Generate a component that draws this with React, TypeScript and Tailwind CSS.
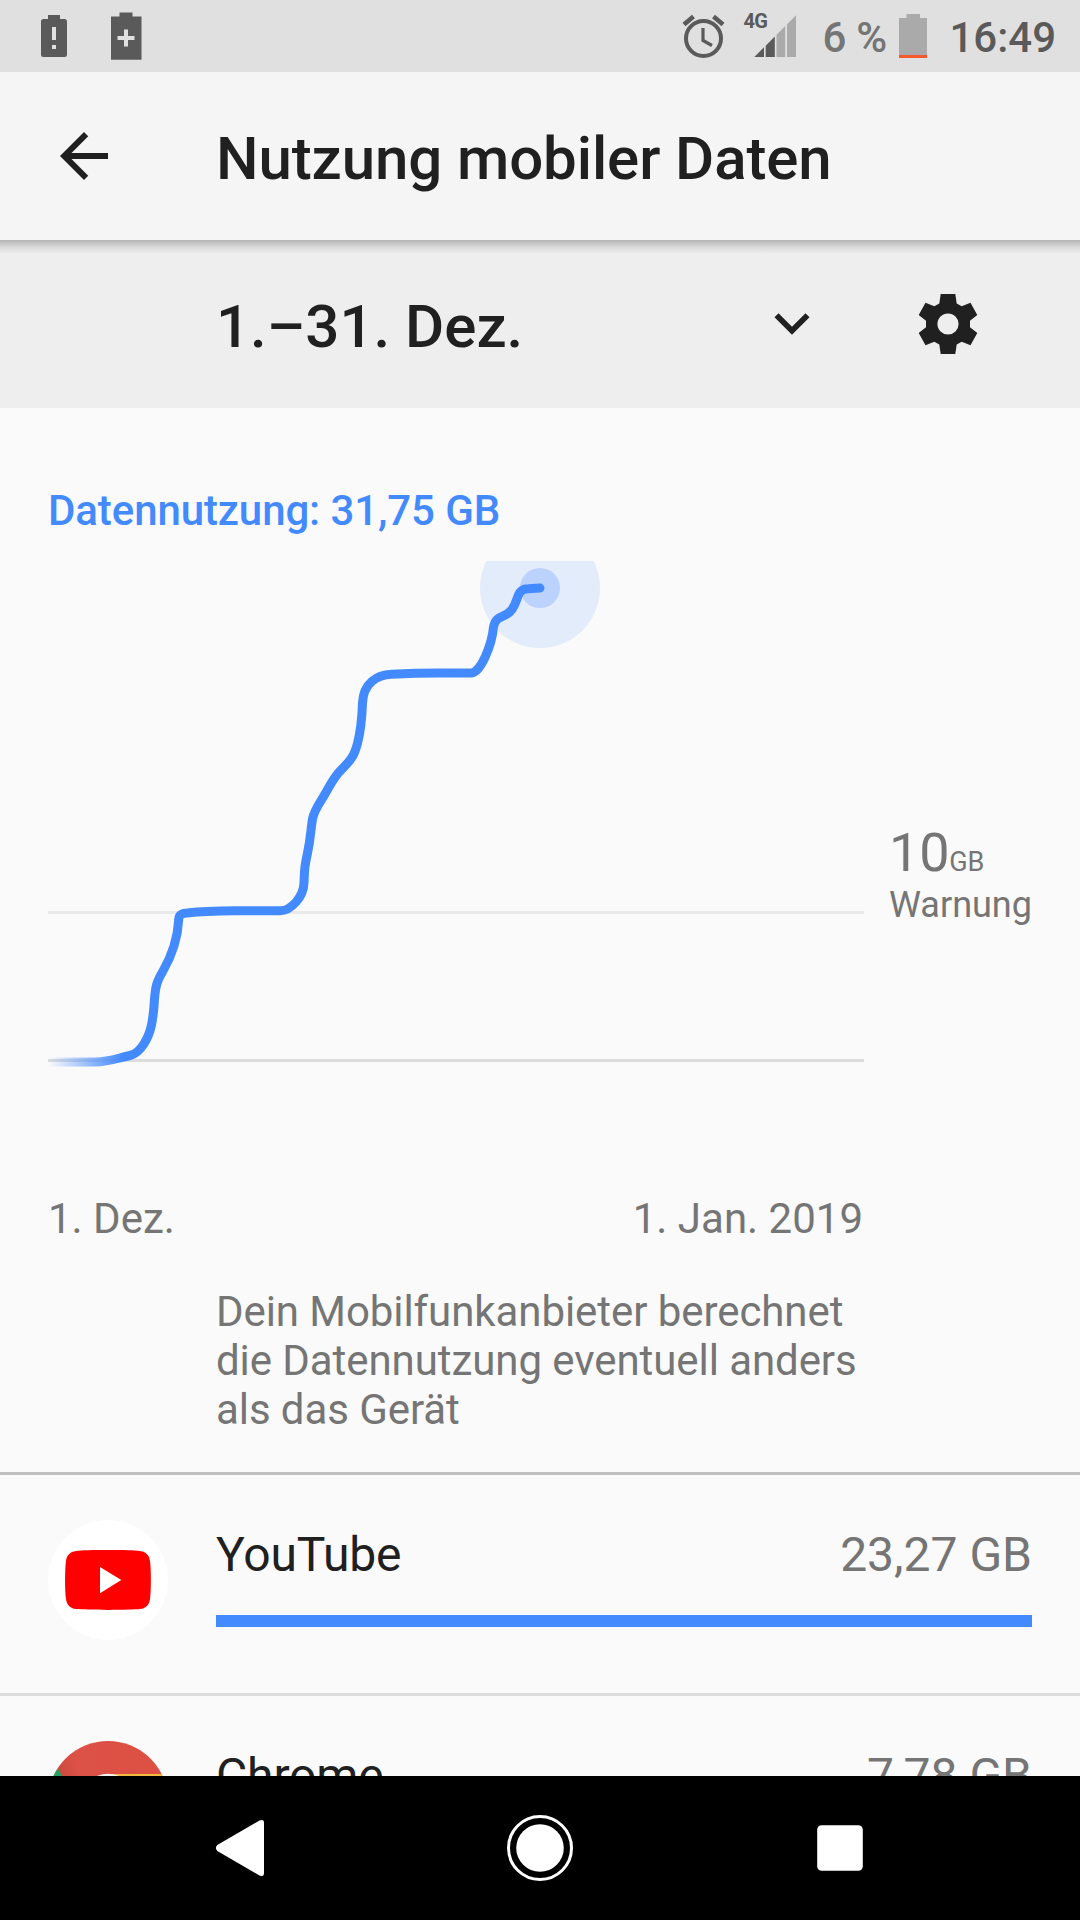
import { ReactNode } from "react";

function StatusBar() {
  return (
    <div className="flex h-[72px] shrink-0 items-start justify-between bg-[#e0e0e0] text-[#5a5a5a]">
      <svg className="h-[72px] w-[160px]" viewBox="0 0 160 72" fill="currentColor">
        <path
          fillRule="evenodd"
          d="M48 15h12v4h4.500a2.500 2.500 0 0 1 2.500 2.500v33a2.500 2.500 0 0 1-2.500 2.500h-21a2.500 2.500 0 0 1-2.500-2.500v-33a2.500 2.500 0 0 1 2.500-2.500h4.500zM52 27v13h4V27zM52 45v4h4v-4z"
        />
        <path
          fillRule="evenodd"
          d="M119.500 12.500h13V16.500H141.500V59.700H111V16.500h8.500zM124 29.500v6.500h-6.500v4h6.500v6.500h4V40h6.500v-4H128v-6.500z"
        />
      </svg>
      <div className="flex h-[72px] items-center pr-6">
        <svg className="h-[72px] w-[60px]" viewBox="678 0 60 72" fill="none" stroke="currentColor">
          <circle cx="703.500" cy="38.500" r="17.500" strokeWidth="4" />
          <path d="M703 28v12.500l9 5" strokeWidth="3.200" />
          <path d="M684 24.500l9.500-8M723 24.500l-9.500-8" strokeWidth="4.600" />
        </svg>
        <svg className="h-[72px] w-[84px]" viewBox="738 0 84 72" fill="currentColor">
          <text x="743.500" y="27.500" fontSize="20" fontWeight="700" textLength="24.500">
            4G
          </text>
          <path d="M754.300 57l9.700-9.700V57zM765.700 45.700l9.100-9.100V57h-9.100z" />
          <path fill="#aaaaaa" d="M776.500 34.800l8.700-8.700V57h-8.700zM787 24.300l9-9V57h-9z" />
        </svg>
        <span className="w-[77px] pt-[3px] text-[42px] leading-none font-medium tracking-[-0.3px] whitespace-nowrap text-[#757575]">
          6 %
        </span>
        <svg className="h-[72px] w-[50px]" viewBox="899 0 50 72">
          <path fill="#aaaaaa" d="M906.500 14H920v4h7v37h-28V18h7.500z" />
          <path fill="#f4592b" d="M899 55h28v3h-28z" />
        </svg>
        <span className="pt-[3px] text-[42px] leading-none font-medium">16:49</span>
      </div>
    </div>
  );
}

function AppBar() {
  return (
    <header className="relative z-10 flex h-[168px] shrink-0 items-center bg-[#f5f5f5] pl-12">
      <svg className="size-[72px]" viewBox="0 0 24 24" fill="#202020">
        <path d="M20 11H7.830l5.590-5.590L12 4l-8 8 8 8 1.410-1.410L7.830 13H20v-2z" />
      </svg>
      <h1 className="pt-[5px] pl-24 text-[60px] leading-[70px] font-medium tracking-[-0.1px]">
        Nutzung mobiler Daten
      </h1>
      <div className="absolute inset-x-0 top-full h-[14px] bg-linear-to-b from-black/25 via-black/9 to-transparent" />
    </header>
  );
}

function CycleBar() {
  return (
    <div className="flex h-[168px] shrink-0 items-center bg-[#eeeeee] pr-24 pl-[216px]">
      <div className="flex-1 pt-[5px] text-[60px] leading-[70px] font-medium">1.–31. Dez.</div>
      <svg className="mr-[84px] size-[72px]" viewBox="0 0 72 72" fill="none">
        <path d="M20.500 27.300L36 42.700l15.500-15.400" stroke="#202020" strokeWidth="5.700" />
      </svg>
      <svg className="size-[72px]" viewBox="-36 -36 72 72" fill="#202020">
        <path
          fillRule="evenodd"
          d="M-7.300-30H7.300L8.700-20.500 13.700-17.800 22.500-21.200 29.300-9 22-3.300V3.300L29.300 9 22.500 21.200 13.700 17.800 8.700 20.500 7.300 30H-7.300L-8.700 20.500-13.700 17.800-22.500 21.200-29.300 9-22 3.300V-3.300L-29.300-9-22.500-21.200-13.700-17.800-8.700-20.500zM0-10.600a10.600 10.600 0 1 0 0 21.200a10.600 10.600 0 1 0 0-21.200z"
        />
      </svg>
    </div>
  );
}

function UsageChart() {
  return (
    <svg className="h-[540px] w-[816px] shrink-0" viewBox="48 561 816 540" fill="none">
      <defs>
        <linearGradient id="fade" gradientUnits="userSpaceOnUse" x1="48" y1="0" x2="122" y2="0">
          <stop offset="0" stopColor="#448aff" stopOpacity="0" />
          <stop offset="1" stopColor="#448aff" />
        </linearGradient>
      </defs>
      <path d="M48 911h816v3H48z" fill="#e9e9e9" />
      <path d="M48 1059h816v3H48z" fill="#dcdcdc" />
      <circle cx="540" cy="588" r="60" fill="#e2ecfb" />
      <circle cx="540" cy="588" r="20" fill="#bbd2fd" />
      <path
        d="M48 1062H95C109 1062 118 1058 130 1055.500C141 1053 149 1037 151.500 1025C154 1012 154 1006 154.500 999C155.500 986 157 981 163 971C171 957 177.500 941 178.700 920C178.700 915 182 913.300 187 913Q205 911 235 910.800H280C291 910.800 303.500 897 304 883C304.500 868 304.800 866 307.500 853C310.800 838 310.500 831 312.500 819C314.500 809 320 803 325 794C332 782 333.500 777.500 341.500 769.500C350 761 354 757 357.500 743.300C361.500 728 362 717 362.500 703C363.300 683 377 674.800 391.500 674.300Q415 673 440 673H471C481 673 492 644 493.500 627C496 614 505 619 512 609.500C519 600 516 589 528 588.700L540 588"
        stroke="url(#fade)"
        strokeWidth="9"
        strokeLinecap="round"
        strokeLinejoin="round"
      />
    </svg>
  );
}

function YouTubeIcon() {
  return (
    <svg className="size-[120px]" viewBox="0 0 120 120">
      <circle cx="60" cy="60" r="60" fill="#fff" />
      <path
        fill="#f00"
        d="M60 30C75 30 87 30.200 92 30.900C98 31.800 101.300 35 102 41C103.200 49 103.200 71 102 79C101.300 85 98 88.200 92 89.100C84 90.200 36 90.200 28 89.100C22 88.200 18.700 85 18 79C16.800 71 16.800 49 18 41C18.700 35 22 31.800 28 30.900C33 30.200 45 30 60 30z"
      />
      <path fill="#fff" d="M52 47l21.300 13L52 73.300z" />
    </svg>
  );
}

function ChromeIcon() {
  return (
    <svg className="size-[120px]" viewBox="0 0 120 120">
      <defs>
        <linearGradient id="red" x1="0" y1="0.300" x2="1" y2="0">
          <stop offset="0" stopColor="#c3453a" />
          <stop offset="0.250" stopColor="#dc5246" />
          <stop offset="1" stopColor="#dd4f42" />
        </linearGradient>
      </defs>
      <circle cx="60" cy="60" r="60" fill="url(#red)" />
      <path fill="#20a464" d="M9.700 27.500L36.500 73.500L60 120A60 60 0 0 1 9.700 27.500z" />
      <path fill="#f4b93f" d="M60 33h53.500A60 60 0 0 1 60 120L83.500 73.500z" />
      <circle cx="60" cy="60" r="27.300" fill="#f1f1f1" />
      <circle cx="60" cy="60" r="22" fill="#4a8af4" />
    </svg>
  );
}

interface AppRowProps {
  icon: ReactNode;
  name: string;
  usage: string;
  percent: number;
}

function AppRow({ icon, name, usage, percent }: AppRowProps) {
  return (
    <li className="flex h-[221px] shrink-0 gap-12 border-b-3 border-[#dcdcdc] px-12 pt-[45px]">
      {icon}
      <div className="flex-1 pt-[7px]">
        <div className="flex justify-between text-[48px] leading-[56px]">
          <span className="tracking-[-0.15px]">{name}</span>
          <span className="text-[#757575]">{usage}</span>
        </div>
        <div className="mt-8 h-3">
          <div className="h-full bg-[#448aff]" style={{ width: `${percent}%` }} />
        </div>
      </div>
    </li>
  );
}

function NavBar() {
  return (
    <nav className="flex h-36 shrink-0 items-center justify-center gap-[228px] bg-black">
      <svg className="size-[72px]" viewBox="0 0 72 72" fill="#fff">
        <path d="M13.300 33L55.500 8.600Q60 6.500 60 11V61Q60 65.500 55.500 63.400L13.300 39Q10.500 36 13.300 33z" />
      </svg>
      <svg className="size-[72px]" viewBox="0 0 72 72">
        <circle cx="36" cy="36" r="31.500" fill="none" stroke="#fff" strokeWidth="3" />
        <circle cx="36" cy="36" r="23.800" fill="#fff" />
      </svg>
      <svg className="size-[72px]" viewBox="0 0 72 72" fill="#fff">
        <rect x="13.200" y="13.200" width="45.600" height="45.600" rx="4.500" />
      </svg>
    </nav>
  );
}

function App() {
  return (
    <div className="flex h-[1920px] w-[1080px] flex-col overflow-hidden bg-[#fafafa] font-[Roboto,sans-serif] text-[#202020]">
      <StatusBar />
      <AppBar />
      <CycleBar />
      <main className="flex flex-1 flex-col overflow-hidden">
        <section className="flex h-[1067px] shrink-0 flex-col border-b-3 border-[#c0c0c0] px-12 pt-[78px] text-[42px] leading-[49px] text-[#757575]">
          <h2 className="font-medium tracking-[-0.1px] text-[#448aff]">Datennutzung: 31,75 GB</h2>
          <div className="mt-[26px] flex gap-[25px]">
            <UsageChart />
            <div className="pt-[260px]">
              <div className="h-[63px] text-[54px] leading-[64px] tracking-[-0.2px] whitespace-nowrap">
                10<span className="text-[27px]">GB</span>
              </div>
              <div className="text-[36px] leading-[42px]">Warnung</div>
            </div>
          </div>
          <div className="mt-[93px] flex w-[815px] justify-between">
            <span>1. Dez.</span>
            <span>1. Jan. 2019</span>
          </div>
          <p className="mt-11 ml-[168px] w-[648px] tracking-[-0.07px]">
            Dein Mobilfunkanbieter berechnet die Datennutzung eventuell anders als das Gerät
          </p>
        </section>
        <ul className="flex flex-col">
          <AppRow icon={<YouTubeIcon />} name="YouTube" usage="23,27 GB" percent={100} />
          <AppRow icon={<ChromeIcon />} name="Chrome" usage="7,78 GB" percent={33} />
        </ul>
      </main>
      <NavBar />
    </div>
  );
}

export default App;
